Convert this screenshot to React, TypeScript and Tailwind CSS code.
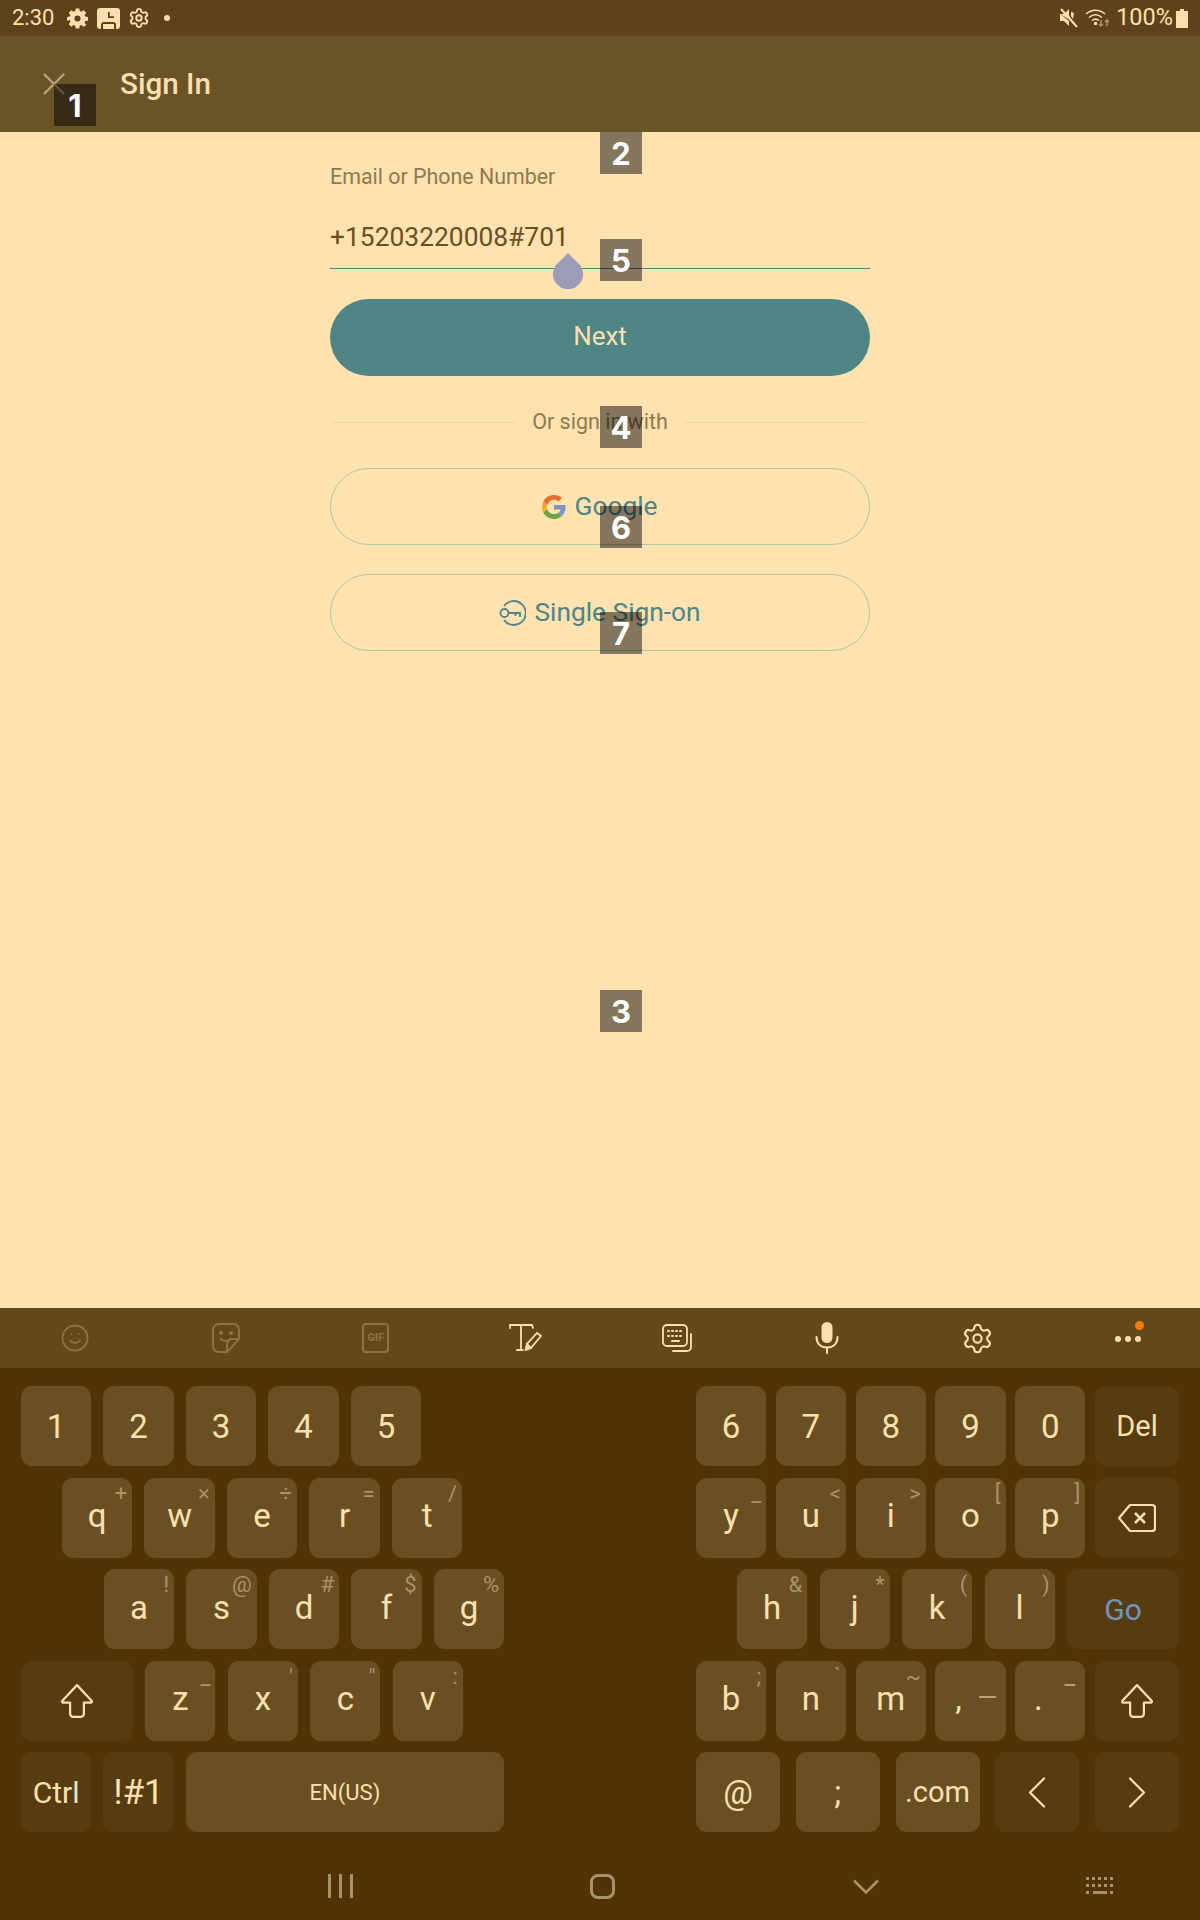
import { Settings, Smile, X } from "lucide-react";
import type { ReactNode } from "react";

const cream = "#fbe0af";

function Key({
  w = "w-[70.200px]",
  label,
  sub,
  dark,
  labelClass = "text-[33px]",
  subClass = "right-[5px] top-0 text-[22px]",
  children,
}: {
  w?: string;
  label?: string;
  sub?: string;
  dark?: boolean;
  labelClass?: string;
  subClass?: string;
  children?: ReactNode;
}) {
  return (
    <div
      className={`${w} relative flex h-[80px] shrink-0 items-center justify-center rounded-[11px] text-[#fbe0af] ${
        dark ? "bg-[#573c12]" : "bg-[#6a4f22]"
      }`}
    >
      {label && <span className={`leading-none ${sub ? "-mt-[4px]" : "pt-[1px]"} ${labelClass}`}>{label}</span>}
      {sub && <span className={`absolute leading-[32px] text-[#a8926a] ${subClass}`}>{sub}</span>}
      {children}
    </div>
  );
}

function ShiftIcon() {
  return (
    <svg width="34" height="36" viewBox="0 0 32 34" fill="none" stroke={cream} strokeWidth="2.100" strokeLinejoin="round">
      <path d="M16 2 30 17a1 1 0 0 1-1 1.500h-6.500V29a3 3 0 0 1-3 3h-7a3 3 0 0 1-3-3V18.500H3a1 1 0 0 1-1-1.500Z" />
    </svg>
  );
}

function Chevron({ dir }: { dir: "left" | "right" }) {
  return (
    <svg width="18" height="31" viewBox="0 0 18 31" fill="none" stroke={cream} strokeWidth="2.200" strokeLinecap="round" strokeLinejoin="round">
      <path d={dir === "left" ? "M16 1.500 2 15.500l14 14" : "M2 1.500l14 14-14 14"} />
    </svg>
  );
}

function GearSolid() {
  return (
    <svg width="21" height="22" viewBox="0 0 24 24" fill={cream}>
      <path
        fillRule="evenodd"
        d="M10 1h4l.6 3.100 1.900.8L19.100 3l2.900 2.900-1.900 2.600.8 1.900L24 11v4l-3.100.4-.8 1.900 1.900 2.800L19.100 22l-2.600-1.900-1.900.8L14 24h-4l-.6-3.100-1.900-.8L4.900 22 2 19.100l1.900-2.800-.8-1.900L0 15v-4l3.100-.6.8-1.900L2 5.900 4.900 3l2.600 1.900 1.900-.8ZM12 9a3.500 3.500 0 1 0 0 7 3.500 3.500 0 0 0 0-7Z"
      />
    </svg>
  );
}

function StatusBar() {
  return (
    <div className="flex h-[36px] shrink-0 items-center justify-between bg-[#5c431b] px-[12px] text-[#fbe0af]">
      <div className="flex items-center">
        <span className="w-[55px] text-[22px] leading-none">2:30</span>
        <GearSolid />
        <svg className="ml-[9px]" width="23" height="21" viewBox="0 0 23 21" fill={cream}>
          <path
            fillRule="evenodd"
            d="M3 0h17a3 3 0 0 1 3 3v15a3 3 0 0 1-3 3h-1v-4a3 3 0 0 0-3-3H7a3 3 0 0 0-3 3v4H3a3 3 0 0 1-3-3V3a3 3 0 0 1 3-3Zm8 4v6h6V8.200h-4.200V4ZM6 16h11v5H6Z"
          />
        </svg>
        <Settings className="ml-[8px]" size={22} strokeWidth={2} color={cream} />
        <div className="ml-[14px] h-[6px] w-[6px] rounded-full bg-[#fbe0af]" />
      </div>
      <div className="flex items-center">
        <svg width="18" height="20" viewBox="0 0 18 20" fill={cream}>
          <path d="M0 6h4l5-5v6.500L15 16.500V15ZM0 6v7h4l5 5v-5Z" />
          <path d="M1 1l16 18" stroke={cream} strokeWidth="2" />
          <path d="M11 4l3 1-1 6-2-3Z" />
        </svg>
        <svg className="ml-[7px]" width="25" height="20" viewBox="0 0 25 20" fill="none" stroke={cream} strokeWidth="1.500">
          <path d="M1 6c5.500-5 13.500-5 19 0" />
          <path d="M4 9.500c4-3.300 9-3.300 13 0" />
          <path d="M7 12.500c2.300-1.800 4.700-1.800 7 0" />
          <circle cx="10.500" cy="15.500" r="1" fill={cream} />
          <path d="M16 12v6m-2-2 2 2 2-2" stroke="#a8926a" />
          <path d="M22 18v-6m-2 2 2-2 2 2" stroke="#a8926a" />
        </svg>
        <span className="ml-[6px] text-[23.500px] leading-none">100%</span>
        <svg className="ml-[3px]" width="12" height="19" viewBox="0 0 12 19" fill={cream}>
          <path d="M4 0h4v2h4v17H0V2h4Z" />
        </svg>
      </div>
    </div>
  );
}

function TextField() {
  return (
    <div className="relative">
      <div className="pt-[33px] text-[21.400px] leading-[24px] text-[#8f7a50]">Email or Phone Number</div>
      <div className="mt-[31px] h-[34px] text-[26.400px] leading-[34px] text-[#6a4f22]">+15203220008#701</div>
      <div className="mt-[14px] h-[1px] bg-[#4f8585]" />
      <svg className="absolute left-[223px] top-[121px]" width="30" height="36" viewBox="0 0 30 36" fill="#9c9cb8">
        <path d="M15 0 25.500 10.500A15 15 0 1 1 4.500 10.500Z" />
      </svg>
    </div>
  );
}

function GoogleIcon() {
  return (
    <svg width="24" height="24" viewBox="0 0 48 48">
      <path fill="#ec6a2d" d="M24 9.500c3.500 0 6.700 1.200 9.200 3.600l6.900-6.900C35.900 2.400 30.500 0 24 0 14.600 0 6.500 5.400 2.600 13.200l8 6.200C12.400 13.700 17.700 9.500 24 9.500z" />
      <path fill="#7f96c4" d="M47 24.500c0-1.600-.1-3.100-.4-4.500H24v9h12.900c-.6 3-2.200 5.500-4.700 7.200l7.700 6c4.500-4.200 7.100-10.300 7.100-17.700z" />
      <path fill="#f2ab2a" d="M10.500 28.600c-.5-1.400-.8-3-.8-4.600s.3-3.200.8-4.600l-8-6.200C.9 16.500 0 20.100 0 24s.9 7.500 2.600 10.800z" />
      <path fill="#6da53f" d="M24 48c6.500 0 11.900-2.100 15.900-5.800l-7.700-6c-2.200 1.500-4.900 2.300-8.200 2.300-6.300 0-11.600-4.200-13.500-9.900l-8 6.200C6.500 42.600 14.600 48 24 48z" />
    </svg>
  );
}

function KeyIcon() {
  return (
    <svg width="27" height="26" viewBox="0 0 27 26" fill="none" stroke="#4f8585" strokeWidth="1.800">
      <path d="M5 6a12 12 0 1 1 0 14" />
      <circle cx="5.500" cy="13" r="4" />
      <path d="M9.500 13h11.500v4M16.500 13v3" />
    </svg>
  );
}

function OutlineButton({ mt, icon, label }: { mt: string; icon: ReactNode; label: string }) {
  return (
    <div className={`${mt} flex h-[77px] items-center justify-center gap-[8px] rounded-full border border-[#b4c3a3] text-[26.300px] text-[#4f8585]`}>
      {icon}
      <span>{label}</span>
    </div>
  );
}

function Toolbar() {
  const dim = "#8a7346";
  return (
    <div className="grid h-[60px] w-[1203px] shrink-0 grid-cols-8 bg-[#634919]">
      <div className="flex items-center justify-center">
        <Smile size={30} color={dim} strokeWidth={1.500} />
      </div>
      <div className="flex items-center justify-center">
        <svg width="28" height="30" viewBox="0 0 28 30" fill="none" stroke={dim} strokeWidth="2">
          <path d="M7 1h14a6 6 0 0 1 6 6v9L15 29H7a6 6 0 0 1-6-6V7a6 6 0 0 1 6-6Z" />
          <path d="M27 16h-6a6 6 0 0 0-6 6v7" />
          <path d="M8 15c3 4 8 4 11 0" />
          <circle cx="9" cy="10" r="1" fill={dim} />
          <circle cx="19" cy="10" r="1" fill={dim} />
        </svg>
      </div>
      <div className="flex items-center justify-center">
        <div className="flex h-[30px] w-[27px] items-center justify-center rounded-[4px] border-2 border-[#8a7346] text-[11px] font-bold text-[#8a7346]">
          GIF
        </div>
      </div>
      <div className="flex items-center justify-center">
        <svg width="34" height="28" viewBox="0 0 34 28" fill="none" stroke={cream} strokeWidth="1.800" strokeLinecap="round">
          <path d="M1 4V1h22l1 3" />
          <path d="M12 1v25M8 26h6" />
          <path d="M17 25l1-5L28 9l4 3-10 12Z" />
          <path d="M17 26l5-2-4-4Z" fill={cream} />
        </svg>
      </div>
      <div className="flex items-center justify-center">
        <svg width="30" height="28" viewBox="0 0 30 28" fill="none" stroke={cream} strokeWidth="1.800" strokeLinecap="round">
          <rect x="1" y="1" width="24" height="21" rx="4" />
          <path d="M29 10v13a4 4 0 0 1-4 4H11" />
          <path d="M10 17h7" strokeWidth="2" />
          <path d="M6 7h14M6 12h14" strokeDasharray="1 3" strokeWidth="2" />
        </svg>
      </div>
      <div className="flex items-center justify-center">
        <svg width="24" height="32" viewBox="0 0 24 32" fill="none" stroke={cream} strokeWidth="2" strokeLinecap="round">
          <rect x="6.500" y="0" width="11" height="21" rx="5.500" fill={cream} stroke="none" />
          <path d="M1.500 15c0 7 4.500 10.500 10.500 10.500S22.500 22 22.500 15" />
          <path d="M12 25.500V31" />
        </svg>
      </div>
      <div className="flex items-center justify-center">
        <Settings size={33} color={cream} strokeWidth={1.500} />
      </div>
      <div className="relative flex items-center justify-center gap-[4px] pt-[2px]">
        <div className="h-[6px] w-[6px] rounded-full bg-[#fbe0af]" />
        <div className="h-[6px] w-[6px] rounded-full bg-[#fbe0af]" />
        <div className="h-[6px] w-[6px] rounded-full bg-[#fbe0af]" />
        <div className="absolute left-[82px] top-[13px] h-[9px] w-[9px] rounded-full bg-[#f57c00]" />
      </div>
    </div>
  );
}

function Backspace() {
  return (
    <svg width="38" height="30" viewBox="0 0 38 30" fill="none" stroke={cream} strokeWidth="2.200" strokeLinejoin="round">
      <path d="M12 2h22a3 3 0 0 1 3 3v20a3 3 0 0 1-3 3H12L1 15Z" />
      <path d="M17 10l10 10M27 10 17 20" strokeWidth="2.500" />
    </svg>
  );
}

function LeftKeys() {
  return (
    <div className="flex w-[483px] flex-col gap-[11.500px]">
      <div className="flex gap-[12.300px]">
        <Key label="1" />
        <Key label="2" />
        <Key label="3" />
        <Key label="4" />
        <Key label="5" />
      </div>
      <div className="ml-[41px] flex gap-[12.300px]">
        <Key label="q" sub="+" />
        <Key label="w" sub="×" />
        <Key label="e" sub="÷" />
        <Key label="r" sub="=" />
        <Key label="t" sub="/" />
      </div>
      <div className="ml-[83px] flex gap-[12.300px]">
        <Key label="a" sub="!" />
        <Key label="s" sub="@" />
        <Key label="d" sub="#" />
        <Key label="f" sub="$" />
        <Key label="g" sub="%" />
      </div>
      <div className="flex gap-[12.300px]">
        <Key w="w-[112px]" dark>
          <ShiftIcon />
        </Key>
        <Key label="z" sub="_" />
        <Key label="x" sub="'" />
        <Key label="c" sub={'"'} />
        <Key label="v" sub=":" />
      </div>
      <div className="flex gap-[12.300px]">
        <Key label="Ctrl" dark labelClass="text-[30px]" />
        <Key label="!#1" dark labelClass="text-[35px]" />
        <Key w="w-[318px]" label="EN(US)" labelClass="text-[22px]" />
      </div>
    </div>
  );
}

function RightKeys() {
  return (
    <div className="flex w-[483px] flex-col gap-[11.500px]">
      <div className="flex justify-between">
        <Key label="6" />
        <Key label="7" />
        <Key label="8" />
        <Key label="9" />
        <Key label="0" />
        <Key w="w-[84px]" label="Del" dark labelClass="text-[29px]" />
      </div>
      <div className="flex justify-between">
        <Key label="y" sub="_" />
        <Key label="u" sub="<" />
        <Key label="i" sub=">" />
        <Key label="o" sub="[" />
        <Key label="p" sub="]" />
        <Key w="w-[84px]" dark>
          <Backspace />
        </Key>
      </div>
      <div className="ml-[41px] flex justify-between">
        <Key label="h" sub="&" />
        <Key label="j" sub="*" />
        <Key label="k" sub="(" />
        <Key label="l" sub=")" />
        <Key w="w-[112px]" label="Go" dark labelClass="text-[30px] text-[#6e96be]" />
      </div>
      <div className="flex justify-between">
        <Key label="b" sub=";" />
        <Key label="n" sub="`" />
        <Key label="m" sub="~" />
        <Key label="," labelClass="text-[33px] -ml-[24px]" sub="—" subClass="right-[8px] top-[20px] text-[26px] text-[#b7a27a]" />
        <Key label="." labelClass="text-[33px] -ml-[24px]" sub="−" subClass="right-[8px] top-[8px] text-[26px] text-[#b7a27a]" />
        <Key w="w-[84px]" dark>
          <ShiftIcon />
        </Key>
      </div>
      <div className="flex justify-between">
        <Key w="w-[84px]" label="@" />
        <Key w="w-[84px]" label=";" />
        <Key w="w-[84px]" label=".com" labelClass="text-[29px]" />
        <Key w="w-[84px]" dark>
          <Chevron dir="left" />
        </Key>
        <Key w="w-[84px]" dark>
          <Chevron dir="right" />
        </Key>
      </div>
    </div>
  );
}

function NavBar() {
  const c = "#a8926a";
  return (
    <div className="relative h-[88px] shrink-0">
      <div className="absolute left-[328px] top-[42px] flex gap-[8px]">
        <div className="h-[24px] w-[3px] bg-[#a8926a]" />
        <div className="h-[24px] w-[3px] bg-[#a8926a]" />
        <div className="h-[24px] w-[3px] bg-[#a8926a]" />
      </div>
      <div className="absolute left-[590px] top-[42px] h-[25px] w-[25px] rounded-[8px] border-[3px] border-[#a8926a]" />
      <svg className="absolute left-[853px] top-[47px]" width="26" height="15" viewBox="0 0 26 15" fill="none" stroke={c} strokeWidth="2.500">
        <path d="M1 1.500l12 12 12-12" />
      </svg>
      <svg className="absolute left-[1086px] top-[44px]" width="30" height="20" viewBox="0 0 30 20" fill={c}>
        <path d="M0 1h3v3H0zM6 1h3v3H6zM12 1h3v3h-3zM18 1h3v3h-3zM24 1h3v3h-3z" />
        <path d="M0 8h3v3H0zM6 8h3v3H6zM12 8h3v3h-3zM18 8h3v3h-3zM24 8h3v3h-3z" />
        <path d="M0 15h3v3H0zM7 15h14v3H7zM24 15h3v3h-3z" />
      </svg>
    </div>
  );
}

function Badge({ n, pos }: { n: string; pos: string }) {
  return (
    <div
      className={`absolute flex h-[42px] w-[42px] items-center justify-center bg-black/[0.48] text-[31px] font-bold leading-none text-white [font-family:Inter,sans-serif] ${pos}`}
    >
      {n}
    </div>
  );
}

export default function App() {
  return (
    <div className="relative flex h-[1920px] w-[1200px] flex-col overflow-hidden bg-[#fee2b0] [font-family:Roboto,sans-serif]">
      <StatusBar />
      <div className="flex h-[96px] shrink-0 items-center bg-[#6a5229]">
        <X className="ml-[35px]" size={38} color="#b5a27e" strokeWidth={1.500} />
        <span className="ml-[47px] pt-[1px] text-[29.600px] font-medium text-[#fbe0af]">Sign In</span>
      </div>
      <main className="flex-1">
        <div className="mx-auto w-[540px]">
          <TextField />
          <div className="mt-[30px] flex h-[77px] items-center justify-center rounded-full bg-[#4f8585] pb-[2px] text-[26px] text-[#fbe0af]">
            Next
          </div>
          <div className="mt-[30px] flex items-center px-[3px] text-[21.500px] text-[#8f7a50]">
            <div className="h-[1px] flex-1 bg-[#ecd3a2]" />
            <span className="mx-[16px]">Or sign in with</span>
            <div className="h-[1px] flex-1 bg-[#ecd3a2]" />
          </div>
          <OutlineButton mt="mt-[30px]" icon={<GoogleIcon />} label="Google" />
          <OutlineButton mt="mt-[29px]" icon={<KeyIcon />} label="Single Sign-on" />
        </div>
      </main>
      <div className="flex h-[612px] shrink-0 flex-col bg-[#503406]">
        <Toolbar />
        <div className="flex flex-1 justify-between px-[21px] pt-[18px]">
          <LeftKeys />
          <RightKeys />
        </div>
        <NavBar />
      </div>
      <Badge n="1" pos="left-[54px] top-[84px]" />
      <Badge n="2" pos="left-[600px] top-[132px]" />
      <Badge n="3" pos="left-[600px] top-[990px]" />
      <Badge n="4" pos="left-[600px] top-[406px]" />
      <Badge n="5" pos="left-[600px] top-[239px]" />
      <Badge n="6" pos="left-[600px] top-[506px]" />
      <Badge n="7" pos="left-[600px] top-[612px]" />
    </div>
  );
}
